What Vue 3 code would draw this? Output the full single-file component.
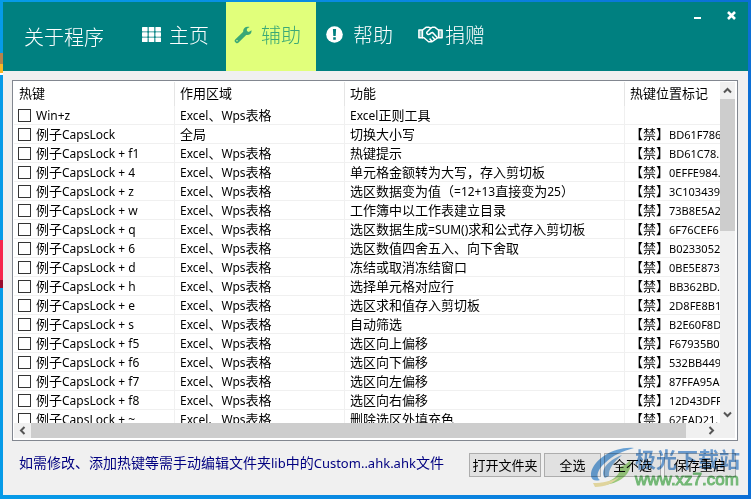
<script setup>
import { ref } from 'vue'

const APPS = 'Excel、Wps表格'

const rows = ref([
  ['Win+z', APPS, 'Excel正则工具', ''],
  ['例子CapsLock', '全局', '切换大小写', 'BD61F786'],
  ['例子CapsLock + f1', APPS, '热键提示', 'BD61C78.'],
  ['例子CapsLock + 4', APPS, '单元格金额转为大写，存入剪切板', '0EFFE984.'],
  ['例子CapsLock + z', APPS, '选区数据变为值（=12+13直接变为25）', '3C103439'],
  ['例子CapsLock + w', APPS, '工作簿中以工作表建立目录', '73B8E5A2'],
  ['例子CapsLock + q', APPS, '选区数据生成=SUM()求和公式存入剪切板', '6F76CEF6'],
  ['例子CapsLock + 6', APPS, '选区数值四舍五入、向下舍取', 'B0233052'],
  ['例子CapsLock + d', APPS, '冻结或取消冻结窗口', '0BE5E873'],
  ['例子CapsLock + h', APPS, '选择单元格对应行', 'BB362BD.'],
  ['例子CapsLock + e', APPS, '选区求和值存入剪切板', '2D8FE8B1'],
  ['例子CapsLock + s', APPS, '自动筛选', 'B2E60F8D'],
  ['例子CapsLock + f5', APPS, '选区向上偏移', 'F67935B0'],
  ['例子CapsLock + f6', APPS, '选区向下偏移', '532BB449'],
  ['例子CapsLock + f7', APPS, '选区向左偏移', '87FFA95A'],
  ['例子CapsLock + f8', APPS, '选区向右偏移', '12D43DFF'],
  ['例子CapsLock + ~', APPS, '删除选区外填充色', '62EAD21.'],
].map(([key, scope, action, mark]) => ({ key, scope, action, mark, checked: false })))

const active = ref('辅助')

// Splits a string into Latin and CJK runs, which are set at different sizes.
const runs = (text) =>
  text.split(/([\x20-\x7e]+)/).filter(Boolean).map((t) => ({ t, latin: /^[\x20-\x7e]/.test(t) }))

const setAll = (value) => rows.value.forEach((row) => { row.checked = value })
</script>

<template>
  <div class="desktop">
    <main class="window">
      <header class="bar">
        <h1 class="title">关于程序</h1>
        <nav class="nav">
          <a href="#home" class="tab" :class="{ active: active === '主页' }" @click.prevent="active = '主页'">
            <span class="slot">
              <svg width="19" height="15" viewBox="0 0 19 15" fill="currentColor">
                <rect x="0" y="0" width="5.6" height="4.4" rx="0.6" /><rect x="6.7" y="0" width="5.6" height="4.4" rx="0.6" /><rect x="13.4" y="0" width="5.6" height="4.4" rx="0.6" />
                <rect x="0" y="5.3" width="5.6" height="4.4" rx="0.6" /><rect x="6.7" y="5.3" width="5.6" height="4.4" rx="0.6" /><rect x="13.4" y="5.3" width="5.6" height="4.4" rx="0.6" />
                <rect x="0" y="10.6" width="5.6" height="4.4" rx="0.6" /><rect x="6.7" y="10.6" width="5.6" height="4.4" rx="0.6" /><rect x="13.4" y="10.6" width="5.6" height="4.4" rx="0.6" />
              </svg>
            </span>主页
          </a>
          <a href="#assist" class="tab" :class="{ active: active === '辅助' }" @click.prevent="active = '辅助'">
            <span class="slot">
              <svg width="18" height="18" viewBox="0 0 18 18">
                <path fill="currentColor" fill-rule="evenodd" d="M15.6 1.1 L12.9 2.8 V5 L14.7 6 L17.5 4.3 C17.9 7.4 15.4 9.5 12.2 8.9 L4.6 16.6 C3.8 17.5 2.7 17.5 1.9 16.8 L1.1 16 C.4 15.2 .4 14.2 1.2 13.4 L9.2 5.8 C8.6 2.5 12 -.3 15.6 1.1 Z M3 13.9 A.8 .8 0 1 0 3 15.5 A.8 .8 0 1 0 3 13.9 Z" />
              </svg>
            </span>辅助
          </a>
          <a href="#help" class="tab" :class="{ active: active === '帮助' }" @click.prevent="active = '帮助'">
            <span class="slot">
              <svg width="17" height="17" viewBox="0 0 17 17">
                <circle cx="8.5" cy="8.5" r="8.3" fill="currentColor" />
                <path d="M6.9 3 H10.1 L9.7 10 H7.3 Z M7.2 11.3 H9.8 V13.7 H7.2 Z" fill="#008080" />
              </svg>
            </span>帮助
          </a>
          <a href="#donate" class="tab" :class="{ active: active === '捐赠' }" @click.prevent="active = '捐赠'">
            <span class="slot">
              <svg width="25" height="17" viewBox="0 0 25 17" fill="none" stroke="currentColor" stroke-width="1.5" stroke-linejoin="round" stroke-linecap="round">
                <path d="M.9 4 H4.4 V11.8 H.9 Z M20.6 4 H24.1 V11.8 H20.6 Z" fill="currentColor" fill-opacity="0.45" />
                <path d="M4.6 4 L8 1.3 H11 L12.6 2.2 L14.2 1.3 H17 L20.4 4 M4.6 11.8 L6 11.8 L10.6 15.7 H14 L18 13 L20.4 11.4" />
                <path d="M12.8 2.2 L8.8 6.2 C8.4 8.8 11.4 9.2 13 7 L14.6 6.4 L19 11.2 M14.6 11 L16.8 13.4 M12 13 L13.4 14.8" />
              </svg>
            </span>捐赠
          </a>
        </nav>
        <div class="controls">
          <button type="button" class="control" aria-label="最小化">
            <svg width="9" height="9" viewBox="0 0 9 9"><rect x="1" y="6" width="7" height="2" fill="#fff" /></svg>
          </button>
          <button type="button" class="control" aria-label="关闭">
            <svg width="9" height="9" viewBox="0 0 9 9"><path d="M1 1 L8 8 M8 1 L1 8" stroke="#fff" stroke-width="2.6" /></svg>
          </button>
        </div>
      </header>

      <section class="list">
        <div class="viewport">
          <table>
            <colgroup><col class="c-key"><col class="c-scope"><col><col class="c-mark"></colgroup>
            <thead>
              <tr><th>热键</th><th>作用区域</th><th>功能</th><th>热键位置标记</th></tr>
            </thead>
            <tbody>
              <tr v-for="row in rows" :key="row.key">
                <td class="key">
                  <label><input v-model="row.checked" type="checkbox"><span><span v-for="(r, i) in runs(row.key)" :key="i" :class="{ latin: r.latin }">{{ r.t }}</span></span></label>
                </td>
                <td><span v-for="(r, i) in runs(row.scope)" :key="i" :class="{ latin: r.latin }">{{ r.t }}</span></td>
                <td><span v-for="(r, i) in runs(row.action)" :key="i" :class="{ latin: r.latin }">{{ r.t }}</span></td>
                <td><template v-if="row.mark">【禁】<span class="code">{{ row.mark }}</span></template></td>
              </tr>
            </tbody>
          </table>
        </div>
        <div class="vscroll">
          <svg class="arrow-v" viewBox="0 0 15 17"><path d="M4 10.5 L7.5 7 L11 10.5" /></svg>
          <div class="track"><div class="vthumb"></div></div>
          <svg class="arrow-v" viewBox="0 0 15 17"><path d="M4 6.5 L7.5 10 L11 6.5" /></svg>
        </div>
        <div class="hscroll">
          <svg class="arrow-h" viewBox="0 0 17 15"><path d="M10.5 4 L7 7.5 L10.5 11" /></svg>
          <div class="hthumb"></div>
          <svg class="arrow-h" viewBox="0 0 17 15"><path d="M6.5 4 L10 7.5 L6.5 11" /></svg>
        </div>
        <div class="corner"></div>
      </section>

      <footer class="foot">
        <p class="note"><span v-for="(r, i) in runs('如需修改、添加热键等需手动编辑文件夹lib中的Custom..ahk.ahk文件')" :key="i" :class="{ 'note-latin': r.latin }">{{ r.t }}</span></p>
        <div class="actions">
          <button type="button" class="btn wide">打开文件夹</button>
          <button type="button" class="btn" @click="setAll(true)">全选</button>
          <button type="button" class="btn" @click="setAll(false)">全不选</button>
          <button type="button" class="btn wide">保存重启</button>
        </div>
      </footer>
    </main>

    <div class="watermark">
      <svg width="44" height="42" viewBox="0 0 44 42">
        <path d="M43 1 C25 -1 3 11 0 26 C-1 32 3 35 9 33 C4 30 7 22 14 16 C22 8 32 4 43 1 Z" fill="#3c8ed8" />
        <path d="M14 31 C8 24 17 13 31 8 C23 15 17 22 18 29 Z" fill="#5b9cd8" />
        <path d="M39 13 C43 26 27 39 8 38 C19 35 30 29 29 20 C32 19 36 17 39 13 Z" fill="#83c95a" />
        <path d="M4 40 C14 40 23 36 28 30 C21 34 11 36 2 36 Z" fill="#e8d98a" />
      </svg>
      <div class="mark-text">
        <span class="mark-name">极光下载站</span>
        <span class="mark-site">www.xz7.com</span>
      </div>
    </div>
  </div>
</template>

<style>
body { margin: 0; }
</style>

<style scoped>
.desktop {
  box-sizing: border-box;
  height: 100vh;
  padding: 2px 3px 4px;
  position: relative;
  overflow: hidden;
  font: 13px/18px "Noto Sans", "Noto Sans CJK SC", sans-serif;
  color: #000;
  background:
    linear-gradient(#b5824a, #b5824a) 0 53px / 3px 11px no-repeat,
    linear-gradient(#f8b624, #f8b624) 0 64px / 3px 9px no-repeat,
    linear-gradient(#ffffff, #ffffff) 0 73px / 3px 2px no-repeat,
    linear-gradient(#f6274c, #f6274c) 0 240px / 3px 40px no-repeat,
    linear-gradient(#9a0c2c, #9a0c2c) 0 280px / 3px 8px no-repeat,
    linear-gradient(90deg, #069be8, #0a84e0 60%, #0c6fd6);
}
.window {
  height: 100%;
  display: flex;
  flex-direction: column;
  background: #f0f0f0;
}
.bar {
  height: 69px;
  flex: none;
  display: flex;
  align-items: stretch;
  background: #008080;
  color: #fff;
}
.title {
  margin: 0;
  width: 110px;
  padding-left: 21px;
  font: 300 20px/70px "Noto Sans CJK SC", sans-serif;
  white-space: nowrap;
}
.nav { display: flex; gap: 2px; }
.tab {
  box-sizing: border-box;
  width: 90px;
  padding: 0 0 4px 8px;
  display: flex;
  align-items: center;
  color: #fff;
  font: 300 20px/26px "Noto Sans CJK SC", sans-serif;
  text-decoration: none;
  white-space: nowrap;
}
.tab.active { background: #e1ff7b; color: #3aa876; }
.slot { width: 27px; flex: none; display: flex; }
.controls {
  margin-left: auto;
  display: flex;
  align-items: flex-start;
  gap: 15px;
  padding: 5px 7px;
}
.control {
  width: 19px;
  height: 17px;
  padding: 0;
  border: 0;
  background: none;
  display: grid;
  place-items: center;
}
.list {
  flex: 1;
  min-height: 0;
  margin: 9px 10px 0 9px;
  padding: 1px 2px 2px 1px;
  border: 1px solid #828790;
  background: #fff;
  display: grid;
  grid-template: minmax(0, 1fr) 15px / minmax(0, 1fr) 15px;
}
.viewport { overflow: hidden; }
table { width: 100%; table-layout: fixed; border-collapse: separate; border-spacing: 0; }
.c-key { width: 161px; }
.c-scope { width: 170px; }
.c-mark { width: 95px; }
th, td {
  padding: 0 0 0 5px;
  text-align: left;
  font-weight: 400;
  white-space: nowrap;
  overflow: hidden;
  border-right: 1px solid #f0f0f0;
}
th { height: 22px; padding-bottom: 2px; border-color: #e5e5e5; }
td { height: 18px; border-bottom: 1px solid #f0f0f0; }
th:last-child, td:last-child { border-right: 0; }
.key { padding-left: 4px; }
.key label { display: flex; align-items: center; gap: 5px; height: 18px; }
input[type="checkbox"] {
  appearance: none;
  flex: none;
  width: 13px;
  height: 13px;
  margin: 0;
  border: 1px solid #333;
  background: #fff;
}
input[type="checkbox"]:checked { background: #333; box-shadow: inset 0 0 0 2px #fff; }
.latin { font-size: 12px; line-height: 12px; }
.code { font-size: 11px; line-height: 12px; }
.vscroll { background: #f0f0f0; display: flex; flex-direction: column; }
.track { flex: 1; }
.vthumb { height: 43%; background: #cdcdcd; }
.hscroll { background: #f0f0f0; display: flex; }
.hthumb { flex: 1; margin-right: 17px; background: #cdcdcd; }
.arrow-v { width: 15px; height: 17px; flex: none; }
.arrow-h { width: 17px; height: 15px; flex: none; }
.arrow-v path, .arrow-h path { fill: none; stroke: #555; stroke-width: 2; }
.corner { background: #f0f0f0; }
.foot {
  flex: none;
  display: flex;
  justify-content: space-between;
  align-items: flex-start;
  padding: 12px 12px 18px 16px;
}
.note { margin: 0; font-size: 14px; line-height: 20px; color: #000080; white-space: nowrap; }
.note-latin { font-size: 13px; line-height: 14px; }
.actions { display: flex; gap: 3px; }
.btn {
  box-sizing: border-box;
  width: 57px;
  height: 24px;
  padding: 0;
  border: 1px solid #adadad;
  background: #e1e1e1;
  color: #000;
  font: inherit;
  line-height: 20px;
  white-space: nowrap;
}
.btn.wide { width: 72px; }
.watermark {
  position: absolute;
  right: 11px;
  bottom: 8px;
  display: flex;
  align-items: flex-start;
  pointer-events: none;
  opacity: 0.75;
  mix-blend-mode: multiply;
}
.mark-text { display: flex; flex-direction: column; }
.mark-name { font: 700 21px/22px "Noto Sans CJK SC", sans-serif; color: #3f86cf; }
.mark-site { font: 400 17px/22px "Liberation Sans", sans-serif; color: #4caf50; -webkit-text-stroke: 1px #4caf50; }
</style>
